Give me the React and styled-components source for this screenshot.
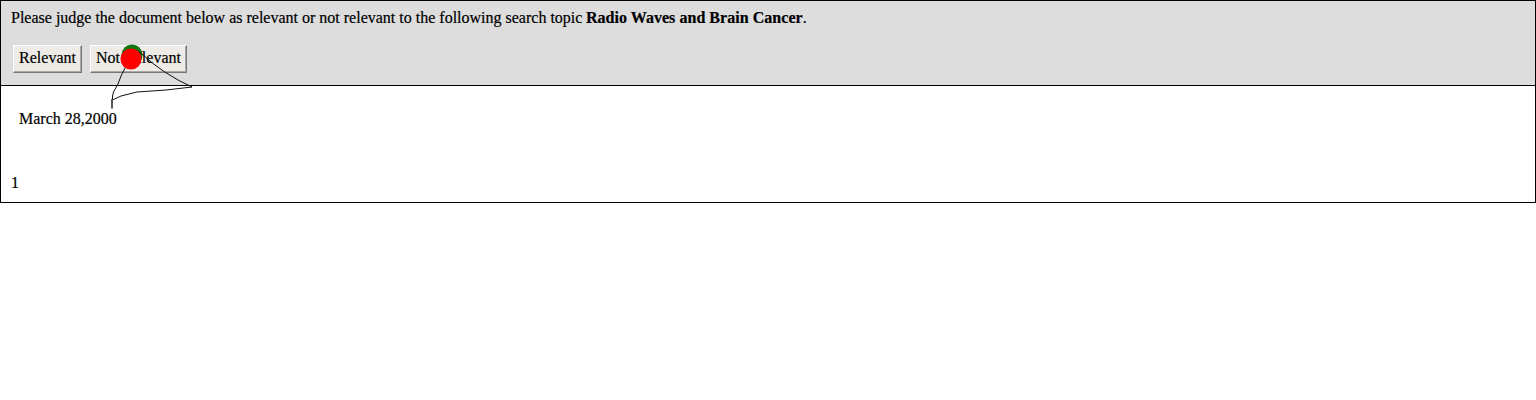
import React from "react";
import styled, { createGlobalStyle } from "styled-components";

const GlobalStyle = createGlobalStyle`
  body {
    margin: 0;
    background: #fff;
    color: #000;
    font: 16px/18px "Liberation Serif", "Times New Roman", serif;
    -webkit-text-stroke: 0.2px #000;
  }
`;
const Page = styled.main`
  position: relative;
  box-sizing: border-box;
  height: 203px;
  border: 1px solid #000;
`;
const JudgeBar = styled.header`
  box-sizing: border-box;
  height: 85px;
  padding: 8px 10px 0;
  background: #ddd;
  border-bottom: 1px solid #000;
`;
const Prompt = styled.p`
  margin: 0;
`;
const Topic = styled.b`
  letter-spacing: 0.04px;
  margin-left: -0.5px;
`;
const Actions = styled.div`
  display: flex;
  gap: 8px;
  margin: 18px 0 0 2px;
`;
const JudgeButton = styled.button`
  box-sizing: border-box;
  width: ${(p) => p.$width}px;
  height: 28px;
  padding: 0 0 2px;
  border: 1px solid;
  border-color: #fff #777 #777 #fff;
  box-shadow: inset -1px -1px 0 #aaa8a4;
  background: #eeebe7;
  color: #000;
  font: inherit;
  white-space: nowrap;
`;
const Document = styled.section`
  padding: 24px 10px 0;
`;
const DocDate = styled.p`
  margin: 0 0 46px 8px;
`;
const DocIndex = styled.p`
  margin: 0;
`;
const CursorTrail = styled.svg`
  position: absolute;
  left: -1px;
  top: -1px;
  pointer-events: none;
`;

export default function App() {
  return (
    <>
      <GlobalStyle />
      <Page>
        <JudgeBar>
          <Prompt>
            Please judge the document below as relevant or not relevant to the following search topic{" "}
            <Topic>Radio Waves and Brain Cancer</Topic>.
          </Prompt>
          <Actions>
            <JudgeButton $width={69}>Relevant</JudgeButton>
            <JudgeButton $width={97}>Not Relevant</JudgeButton>
          </Actions>
        </JudgeBar>
        <Document>
          <DocDate>March 28,2000</DocDate>
          <DocIndex>1</DocIndex>
        </Document>
        <CursorTrail width="210" height="120" viewBox="0 0 210 120">
          <circle cx="132" cy="55" r="10.5" fill="#117711" />
          <path
            d="M137 51L142 54L153 63.5L164 71.5L178 80L192 87L166 90L137 92L121 96L112.5 100V96L113.5 92L118 84L121 76L125.5 67"
            fill="none"
            stroke="#111"
          />
          <path d="M112 99V108.5" fill="none" stroke="#444" strokeWidth="1.8" />
          <circle cx="131" cy="59" r="10.5" fill="#f00" />
        </CursorTrail>
      </Page>
    </>
  );
}
